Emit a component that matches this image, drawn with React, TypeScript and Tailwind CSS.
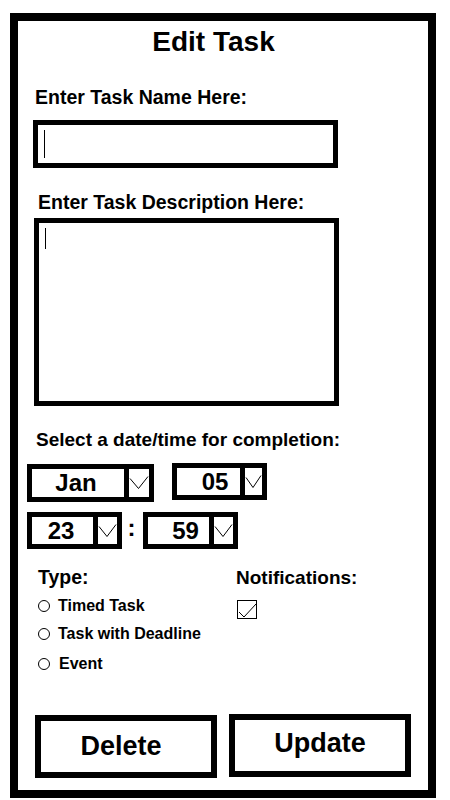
import React from "react";

const font = { fontFamily: '"Liberation Sans", Arial, sans-serif' };

function Chevron({ w }: { w: number }) {
  return (
    <svg width={w} height={16} viewBox={`0 0 ${w} 16`} className="block">
      <polyline
        points={`1,3.5 ${w / 2 - 0.5},13.5 ${w - 1},1.5`}
        fill="none"
        stroke="#000"
        strokeWidth={1}
      />
    </svg>
  );
}

function Dropdown({
  value,
  outerW,
  h,
  valueW,
  arrowW,
  textClass,
  extraClass,
}: {
  value: string;
  outerW: number;
  h: number;
  valueW: number;
  arrowW: number;
  textClass: string;
  extraClass: string;
}) {
  return (
    <div
      className={`flex border-[5px] border-black bg-white ${extraClass}`}
      style={{ width: outerW, height: h }}
    >
      <div
        className={`flex h-full items-center justify-center text-[24px] font-bold leading-none ${textClass}`}
        style={{ width: valueW }}
      >
        {value}
      </div>
      <div
        className="flex h-full items-center justify-center border-l-[5px] border-black"
        style={{ width: arrowW + 5 }}
      >
        <Chevron w={arrowW} />
      </div>
    </div>
  );
}

function Radio({ label, textMl, mt }: { label: string; textMl: string; mt: string }) {
  return (
    <div className={`flex h-[20px] items-center ${mt}`}>
      <div className="h-[12px] w-[12px] rounded-full border border-black" />
      <span className={`text-[16px] font-bold leading-none ${textMl}`}>{label}</span>
    </div>
  );
}

export default function App() {
  return (
    <div className="h-[800px] w-[450px] overflow-hidden bg-white text-black" style={font}>
      <div className="ml-[10px] mt-[13px] flex h-[785px] w-[426px] flex-col border-[8px] border-black">
        <div className="mt-[7px] h-[28px] pr-[19px] text-center text-[28px] font-bold leading-none">
          Edit Task
        </div>

        <div className="ml-[17px] mt-[32px] h-[19px] text-[19.5px] font-bold leading-none">
          Enter Task Name Here:
        </div>
        <div className="ml-[15px] mt-[13px] h-[48px] w-[305px] border-[5px] border-black">
          <div className="ml-[6px] mt-[5px] h-[28px] w-px bg-black" />
        </div>

        <div className="ml-[20px] mt-[25px] h-[19px] text-[19.5px] font-bold leading-none">
          Enter Task Description Here:
        </div>
        <div className="ml-[16px] mt-[6px] h-[188px] w-[305px] border-[5px] border-black">
          <div className="ml-[6px] mt-[5px] h-[21px] w-px bg-black" />
        </div>

        <div className="ml-[18px] mt-[24px] h-[19px] text-[19px] font-bold leading-none">
          Select a date/time for completion:
        </div>

        <div className="mt-[14px] flex items-start">
          <Dropdown
            value="Jan"
            outerW={127}
            h={38}
            valueW={92}
            arrowW={20}
            textClass="pr-[4px]"
            extraClass="ml-[9px] mt-px"
          />
          <Dropdown
            value="05"
            outerW={95}
            h={37}
            valueW={63}
            arrowW={17}
            textClass="pl-[13px]"
            extraClass="ml-[18px]"
          />
        </div>

        <div className="mt-[10px] flex items-start">
          <Dropdown
            value="23"
            outerW={95}
            h={37}
            valueW={61}
            arrowW={19}
            textClass="pr-[3px]"
            extraClass="ml-[9px]"
          />
          <div className="flex h-[37px] w-[21px] items-center justify-center pb-[6px] pr-[2px]">
            <span className="text-[24px] font-bold leading-none">:</span>
          </div>
          <Dropdown
            value="59"
            outerW={95}
            h={37}
            valueW={61}
            arrowW={19}
            textClass="pl-[14px]"
            extraClass=""
          />
        </div>

        <div className="ml-[20px] mt-[19px] flex">
          <div className="flex w-[198px] flex-col">
            <div className="h-[19px] text-[19.5px] font-bold leading-none">Type:</div>
            <Radio label="Timed Task" textMl="ml-[8px]" mt="mt-[9px]" />
            <Radio label="Task with Deadline" textMl="ml-[8px]" mt="mt-[8px]" />
            <Radio label="Event" textMl="ml-[9px]" mt="mt-[10px]" />
          </div>
          <div className="flex flex-col">
            <div className="h-[19px] text-[19px] font-bold leading-none">Notifications:</div>
            <div className="ml-px mt-[13px] h-[19px] w-[20px] border border-black">
              <svg width="18" height="17" viewBox="0 0 18 17" className="block">
                <polyline points="1,11 6,16 18,3" fill="none" stroke="#000" strokeWidth={1} />
              </svg>
            </div>
          </div>
        </div>

        <div className="mt-[40px] flex items-start">
          <div className="ml-[17px] mt-px flex h-[63px] w-[182px] items-center justify-center border-[6px] border-black pr-[10px] text-[27px] font-bold leading-none">
            Delete
          </div>
          <div className="ml-[12px] flex h-[63px] w-[182px] items-center justify-center border-[6px] border-black pb-[5px] text-[27px] font-bold leading-none">
            Update
          </div>
        </div>
      </div>
    </div>
  );
}
